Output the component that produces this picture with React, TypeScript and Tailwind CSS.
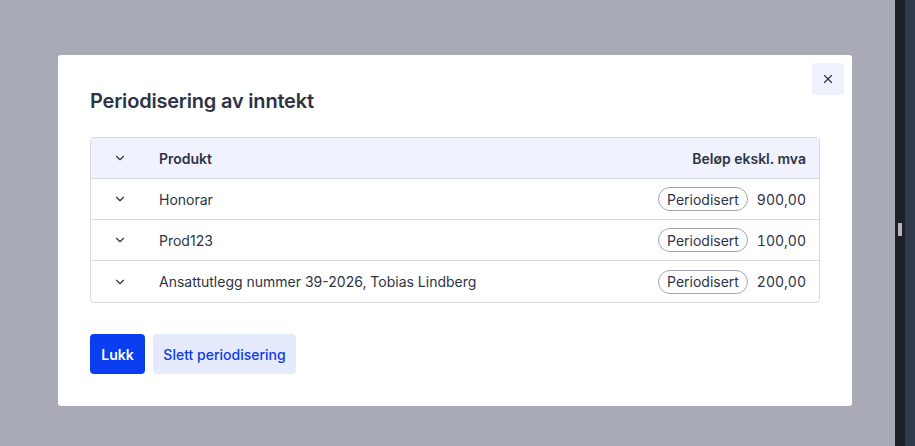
import { ChevronDown, X } from "lucide-react";

const rows = [
  { name: "Honorar", amount: "900,00" },
  { name: "Prod123", amount: "100,00" },
  { name: "Ansattutlegg nummer 39-2026, Tobias Lindberg", amount: "200,00" },
];

export default function App() {
  return (
    <div
      className="flex w-[915px] h-[446px] overflow-hidden text-[#2e3446]"
      style={{ fontFamily: "Inter, 'Noto Sans', sans-serif" }}
    >
      {/* Backdrop with dialog */}
      <div className="flex-1 bg-[#a8abb5] pl-[58px] pt-[55px]">
        <div className="relative w-[794px] h-[351px] bg-white rounded-[3px] px-8 pt-[32px]">
          <button className="absolute top-2 right-2 w-8 h-8 rounded bg-[#eff2fc] flex items-center justify-center text-[#2e3446]">
            <X size={14} strokeWidth={2} />
          </button>

          <h2 className="text-[20px] leading-7 font-semibold text-[#2c3345] tracking-[-0.2px]">
            Periodisering av inntekt
          </h2>

          <div className="mt-[22px] border border-[#d8dae0] rounded-[4px] overflow-hidden text-[14px]">
            <div className="flex items-center h-[41px] bg-[#f0f3fd] border-b border-[#d8dae0] font-semibold">
              <div className="w-[58px] flex justify-center">
                <ChevronDown size={14} strokeWidth={2} />
              </div>
              <div className="pl-[10px] flex-1">Produkt</div>
              <div className="pr-[13px]">Beløp ekskl. mva</div>
            </div>
            {rows.map((row, i) => (
              <div
                key={i}
                className={`flex items-center h-[41px] ${i < rows.length - 1 ? "border-b border-[#d8dae0]" : ""}`}
              >
                <div className="w-[58px] flex justify-center">
                  <ChevronDown size={14} strokeWidth={2} />
                </div>
                <div className="pl-[10px] flex-1">{row.name}</div>
                <div className="flex items-center gap-[6px] pr-[13px]">
                  <span className="h-6 w-[90px] rounded-full border border-[#a3a6ae] flex items-center justify-center">
                    Periodisert
                  </span>
                  <span className="w-[52px] text-right tabular-nums">{row.amount}</span>
                </div>
              </div>
            ))}
          </div>

          <div className="mt-[31px] flex gap-2 text-[14px]">
            <button className="h-10 w-[55px] rounded-[4px] bg-[#0a3ef0] text-white font-semibold">
              Lukk
            </button>
            <button className="h-10 w-[143px] rounded-[4px] bg-[#e5eafc] text-[#0b3de6] font-medium">
              Slett periodisering
            </button>
          </div>
        </div>
      </div>

      {/* Side strip */}
      <div className="w-[10px] bg-[#1e2029] flex flex-col items-center pt-[223px]">
        <div className="w-[4px] h-[13px] bg-[#b3b4bb]" />
      </div>
      <div className="w-[10px] bg-[#313a4f]" />
    </div>
  );
}
